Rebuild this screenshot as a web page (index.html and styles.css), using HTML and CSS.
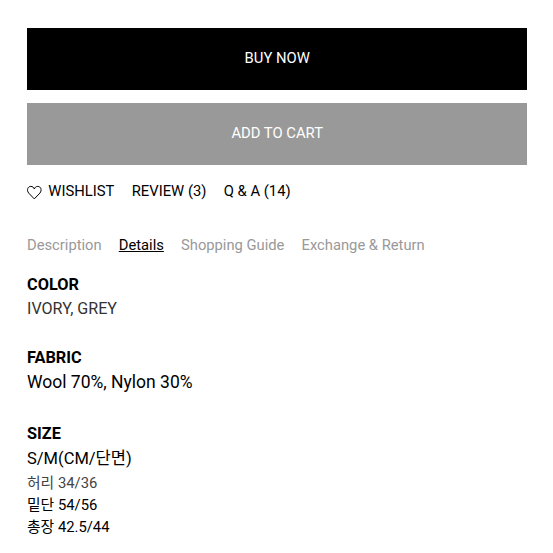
FILE: index.html
```html
<!DOCTYPE html>
<html lang="ko">
<head>
  <meta charset="UTF-8">
  <meta name="viewport" content="width=device-width, initial-scale=1.0">
  <title>Product Details</title>
  <link rel="stylesheet" href="styles.css">
</head>
<body>
  <div class="product-actions">
    <button class="btn btn-buy">BUY NOW</button>
    <button class="btn btn-cart">ADD TO CART</button>
  </div>

  <div class="product-links">
    <a class="wishlist">
      <svg class="heart" viewBox="0 0 15 15" width="15" height="15">
        <path d="M7.3 13.9 L1.7 8.1 C-0.7 5.1 0.8 1.4 3.8 1.4 C5.6 1.4 6.7 2.4 7.3 4 C7.9 2.4 9 1.4 10.8 1.4 C13.8 1.4 15.3 5.1 12.9 8.1 Z" fill="none" stroke="#000" stroke-width="1"/>
      </svg>
      <span>WISHLIST</span>
    </a>
    <a class="review">REVIEW (3)</a>
    <a class="qna">Q &amp; A (14)</a>
  </div>

  <div class="tabs">
    <a class="tab">Description</a>
    <a class="tab active">Details</a>
    <a class="tab">Shopping Guide</a>
    <a class="tab">Exchange &amp; Return</a>
  </div>

  <div class="details">
    <div class="detail-block">
      <h3>COLOR</h3>
      <p class="color-text">IVORY, GREY</p>
    </div>
    <div class="detail-block fabric">
      <h3>FABRIC</h3>
      <p class="fabric-text">Wool 70%, Nylon 30%</p>
    </div>
    <div class="detail-block size">
      <h3>SIZE</h3>
      <p class="size-title">S/M(CM/단면)</p>
      <p class="size-row muted">허리 34/36</p>
      <p class="size-row">밑단 54/56</p>
      <p class="size-row">총장 42.5/44</p>
    </div>
  </div>
</body>
</html>
```

FILE: styles.css
```css
body {
  margin: 0;
  padding: 28px 25.6px 0 27px;
  background: #fff;
  color: #000;
  font-family: Roboto, "Noto Sans CJK KR", sans-serif;
  font-size: 14.8px;
}
.product-actions {
  display: flex;
  flex-direction: column;
  gap: 13px;
}
.btn {
  height: 62px;
  border: 0;
  padding: 0 0 2px;
  color: #fff;
  font-family: inherit;
  font-size: 14.8px;
}
.btn-buy {
  background: #000;
}
.btn-cart {
  background: #999;
}
.product-links {
  display: flex;
  align-items: center;
  gap: 17.3px;
  height: 20px;
  margin-top: 16px;
}
.wishlist {
  display: flex;
  align-items: center;
  gap: 6.3px;
  font-size: 14.8px;
}
.heart {
  display: block;
  margin-top: 2px;
}
.tabs {
  display: flex;
  gap: 17.1px;
  margin-top: 34px;
  line-height: 20px;
  font-size: 14.75px;
}
.tab {
  color: #999;
}
.tab.active {
  color: #000;
  text-decoration: underline;
}
.details {
  margin-top: 18px;
}
.details h3,
.details p {
  margin: 0;
}
.details h3 {
  font-size: 16.3px;
  font-weight: bold;
  line-height: 24px;
}
.color-text {
  color: #333;
  font-size: 16.1px;
  line-height: 24px;
}
.fabric {
  margin-top: 25px;
}
.fabric-text {
  font-size: 17.5px;
  line-height: 25px;
}
.size {
  margin-top: 27px;
}
.size-title {
  font-size: 16.5px;
  line-height: 26px;
}
.size-row {
  font-size: 14.8px;
  line-height: 22px;
}
.muted {
  color: #444;
}
```
